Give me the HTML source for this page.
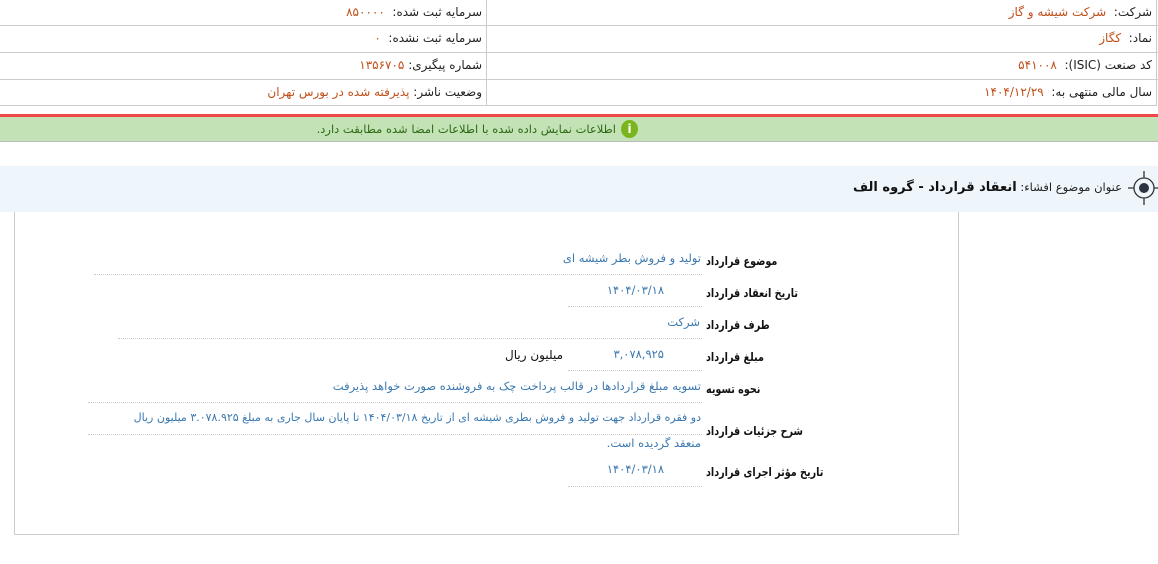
<!DOCTYPE html>
<html><head><meta charset="utf-8"><style>
body{margin:0;width:1158px;height:564px;background:#fff;font-family:"DejaVu Sans","Liberation Sans",sans-serif;font-size:12px;position:relative;overflow:hidden;color:#222}
.a{position:absolute;white-space:nowrap;direction:rtl}
.o{color:#c0501a}
.b{color:#3a78b0;font-size:11.5px}
.hl{position:absolute;height:1px;background:#ccc}
.dl{position:absolute;border-top:1px dotted #ccc;height:0}
.l{font-weight:bold;color:#111;left:706px;font-size:12px;transform:scaleX(0.8);transform-origin:left center}
</style></head><body>
<div style="position:absolute;left:0;top:0;width:1156px;height:105px;border-right:1px solid #ccc;border-bottom:1px solid #ccc"></div>
<div class="hl" style="left:0;top:25px;width:1158px"></div>
<div class="hl" style="left:0;top:52px;width:1158px"></div>
<div class="hl" style="left:0;top:79px;width:1158px"></div>
<div style="position:absolute;left:486px;top:0;width:1px;height:106px;background:#ccc"></div>

<div class="a" style="right:6px;top:5px">شرکت:&nbsp; <span class="o">شرکت شیشه و گاز</span></div>
<div class="a" style="right:676px;top:5px">سرمایه ثبت شده:&nbsp; <span class="o">۸۵۰۰۰۰</span></div>
<div class="a" style="right:6px;top:31px">نماد:&nbsp; <span class="o">کگاز</span></div>
<div class="a" style="right:676px;top:31px">سرمایه ثبت نشده:&nbsp; <span class="o">۰</span></div>
<div class="a" style="right:6px;top:58px">کد صنعت (ISIC):&nbsp; <span class="o">۵۴۱۰۰۸</span></div>
<div class="a" style="right:676px;top:58px">شماره پیگیری: <span class="o">۱۳۵۶۷۰۵</span></div>
<div class="a" style="right:6px;top:85px">سال مالی منتهی به:&nbsp; <span class="o">۱۴۰۴/۱۲/۲۹</span></div>
<div class="a" style="right:676px;top:85px">وضعیت ناشر: <span class="o">پذیرفته شده در بورس تهران</span></div>

<div style="position:absolute;left:0;top:114px;width:1158px;height:3px;background:#f04848"></div>
<div style="position:absolute;left:0;top:117px;width:1158px;height:24px;background:#c3e2b5;border-bottom:1px solid #bbb"></div>
<div style="position:absolute;left:621px;top:120px;width:17px;height:18px;border-radius:50%;background:#7ab51d;color:#fff;font-size:12px;font-weight:bold;text-align:center;line-height:18px">i</div>
<div class="a" style="right:542px;top:122px;color:#2d6a15;font-size:11.5px">اطلاعات نمایش داده شده با اطلاعات امضا شده مطابقت دارد.</div>

<div style="position:absolute;left:0;top:166px;width:1158px;height:46px;background:#eef5fb"></div>
<svg style="position:absolute;left:1128px;top:171px" width="32" height="34" viewBox="0 0 32 34"><circle cx="16" cy="17" r="10" fill="none" stroke="#333" stroke-width="1.3"/><circle cx="16" cy="17" r="5" fill="#2b3440"/><path d="M16 0v7M16 27v7M0 17h6M26 17h6" stroke="#333" stroke-width="1.3"/></svg>
<div class="a" style="right:36px;top:180px;font-size:11.5px">عنوان موضوع افشاء: <b style="font-size:13px;color:#111">انعقاد قرارداد - گروه الف</b></div>

<div style="position:absolute;left:14px;top:212px;width:943px;height:322px;border:1px solid #ccc;border-top:none"></div>

<div class="a l" style="top:254px">موضوع قرارداد</div>
<div class="a b" style="right:457px;top:251px">تولید و فروش بطر شیشه ای</div>
<div class="dl" style="left:94px;top:274px;width:608px"></div>

<div class="a l" style="top:286px">تاریخ انعقاد قرارداد</div>
<div class="a b" style="right:494px;top:283px">۱۴۰۴/۰۳/۱۸</div>
<div class="dl" style="left:568px;top:306px;width:134px"></div>

<div class="a l" style="top:318px">طرف قرارداد</div>
<div class="a b" style="right:458px;top:315px">شرکت</div>
<div class="dl" style="left:118px;top:338px;width:584px"></div>

<div class="a l" style="top:350px">مبلغ قرارداد</div>
<div class="a b" style="right:494px;top:347px">۳,۰۷۸,۹۲۵</div>
<div class="a" style="right:595px;top:348px;color:#111">میلیون ریال</div>
<div class="dl" style="left:568px;top:370px;width:134px"></div>

<div class="a l" style="top:382px">نحوه تسویه</div>
<div class="a b" style="right:457px;top:379px">تسویه مبلغ قراردادها در قالب پرداخت چک به فروشنده صورت خواهد پذیرفت</div>
<div class="dl" style="left:88px;top:402px;width:614px"></div>

<div class="a l" style="top:424px">شرح جزئیات قرارداد</div>
<div class="a b" style="right:457px;top:411px;font-size:11px">دو فقره قرارداد جهت تولید و فروش بطری شیشه ای از تاریخ ۱۴۰۴/۰۳/۱۸ تا پایان سال جاری به مبلغ ۳.۰۷۸.۹۲۵ میلیون ریال</div>
<div class="dl" style="left:88px;top:434px;width:614px"></div>
<div class="a b" style="right:457px;top:436px">منعقد گردیده است.</div>

<div class="a l" style="top:465px">تاریخ مؤثر اجرای قرارداد</div>
<div class="a b" style="right:494px;top:462px">۱۴۰۴/۰۳/۱۸</div>
<div class="dl" style="left:568px;top:486px;width:134px"></div>
</body></html>
